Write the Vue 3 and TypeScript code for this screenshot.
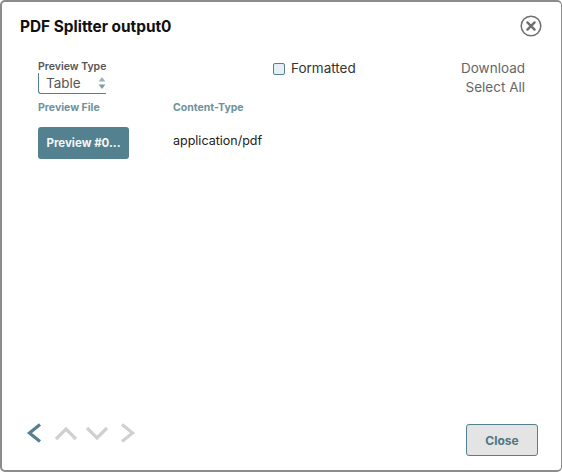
<script setup lang="ts">
const title = 'PDF Splitter output0'
</script>

<template>
  <div class="dialog">
    <header class="head">
      <h1 class="title">{{ title }}</h1>
      <button class="x" aria-label="Close">
        <svg width="22" height="22" viewBox="0 0 22 22">
          <circle cx="11" cy="11" r="9.8" fill="none" stroke="#6f6f6f" stroke-width="1.5" />
          <path d="M7.4 7.4 14.6 14.6M14.6 7.4 7.4 14.6" stroke="#6f6f6f" stroke-width="2.4" stroke-linecap="round" />
        </svg>
      </button>
    </header>
    <section class="controls">
      <div class="ptype">
        <label class="plabel">Preview Type</label>
        <div class="select">
          <span>Table</span>
          <svg width="8" height="14" viewBox="0 0 8 14">
            <path d="M4 1 7.4 5.6H.6Z" fill="#9ab3bb" />
            <path d="M4 13 7.4 8.4H.6Z" fill="#7d9ca6" />
          </svg>
        </div>
      </div>
      <label class="fmt"><span class="box"></span>Formatted</label>
      <div class="links">
        <span>Download</span>
        <span>Select All</span>
      </div>
    </section>
    <section class="table">
      <div class="th c1">Preview File</div>
      <div class="th">Content-Type</div>
      <div class="c1"><button class="pv">Preview #0...</button></div>
      <div class="ct">application/pdf</div>
    </section>
    <footer class="foot">
      <div class="nav">
        <svg width="16" height="22" viewBox="0 0 16 22"><path d="M14 2.5 3.5 11 14 19.5" class="on" /></svg>
        <svg class="up" width="24" height="16" viewBox="0 0 24 16"><path d="M2 14 12 4l10 10" class="off" /></svg>
        <svg class="down" width="24" height="16" viewBox="0 0 24 16"><path d="M2 3 12 13 22 3" class="off" /></svg>
        <svg class="next" width="16" height="22" viewBox="0 0 16 22"><path d="M2 2.5 12.5 11 2 19.5" class="off" /></svg>
      </div>
      <button class="close">Close</button>
    </footer>
  </div>
</template>

<style>
html, body { margin: 0; background: #fff; }
</style>

<style scoped>
.dialog {
  box-sizing: border-box;
  width: 562px;
  height: 472px;
  border: 2px solid #8c8c8c;
  border-right-width: 1px;
  border-radius: 5px;
  background: #fff;
  display: flex;
  flex-direction: column;
  font-family: Inter, "Noto Sans", sans-serif;
  color: #1b1b1b;
}
.head {
  display: flex;
  justify-content: space-between;
  align-items: center;
  padding: 11px 19px 0 18px;
  height: 25px;
}
.title { margin: 0; padding-top: 1px; font-size: 15.4px; font-weight: 700; color: #111; white-space: nowrap; }
.x { border: 0; background: none; padding: 0; display: flex; }
.controls {
  display: flex;
  padding: 22px 36px 0 36px;
  height: 36px;
}
.ptype { width: 68px; }
.plabel { display: block; font-size: 10.5px; font-weight: 600; color: #555; line-height: 13px; white-space: nowrap; }
.select {
  box-sizing: border-box;
  height: 21px;
  border-left: 1px solid #54818f;
  border-bottom: 1px solid #54818f;
  border-radius: 0 0 0 3px;
  display: flex;
  justify-content: space-between;
  align-items: center;
  padding: 0 0 0 7px;
  font-size: 13.5px;
  color: #555;
}
.fmt {
  margin-left: 167px;
  display: flex;
  align-items: flex-start;
  gap: 6px;
  font-size: 13.5px;
  color: #333;
  line-height: 17px;
  white-space: nowrap;
}
.box {
  box-sizing: border-box;
  width: 12px;
  height: 12px;
  margin-top: 3px;
  border: 1px solid #54818f;
  border-radius: 2px;
  background: #e6f0f2;
}
.links {
  margin-left: auto;
  display: flex;
  flex-direction: column;
  align-items: flex-end;
  gap: 2px;
  font-size: 13.5px;
  line-height: 17px;
  color: #666;
}
.table {
  display: grid;
  grid-template-columns: 135px auto;
  justify-content: start;
  padding: 5px 0 0 36px;
  row-gap: 13px;
  align-items: center;
}
.th { font-size: 10.5px; font-weight: 700; color: #6d929e; line-height: 13px; white-space: nowrap; }
.c1 { display: flex; }
.pv {
  width: 91px;
  height: 32px;
  border: 0;
  border-radius: 3px;
  background: #54818f;
  color: #f2f6f7;
  font-family: inherit;
  font-size: 11.5px;
  font-weight: 700;
  padding: 0;
}
.ct { font-size: 12.5px; color: #222; margin-top: -6px; }
.foot {
  margin-top: auto;
  display: flex;
  justify-content: space-between;
  align-items: flex-end;
  padding: 0 23px 14px 24px;
}
.nav { display: flex; align-items: center; height: 24px; margin-bottom: 11px; }
.up { margin-left: 12px; }
.down { margin-left: 7px; }
.next { margin-left: 11px; }
.nav path { fill: none; stroke-width: 3.2; }
.on { stroke: #54818f; }
.off { stroke: #d0d0d0; }
.close {
  box-sizing: border-box;
  width: 72px;
  height: 32px;
  border: 1px solid #54818f;
  border-radius: 3px;
  background: #e4e4e4;
  color: #4f7482;
  font-family: inherit;
  font-size: 12px;
  font-weight: 700;
  padding: 0;
}
</style>
